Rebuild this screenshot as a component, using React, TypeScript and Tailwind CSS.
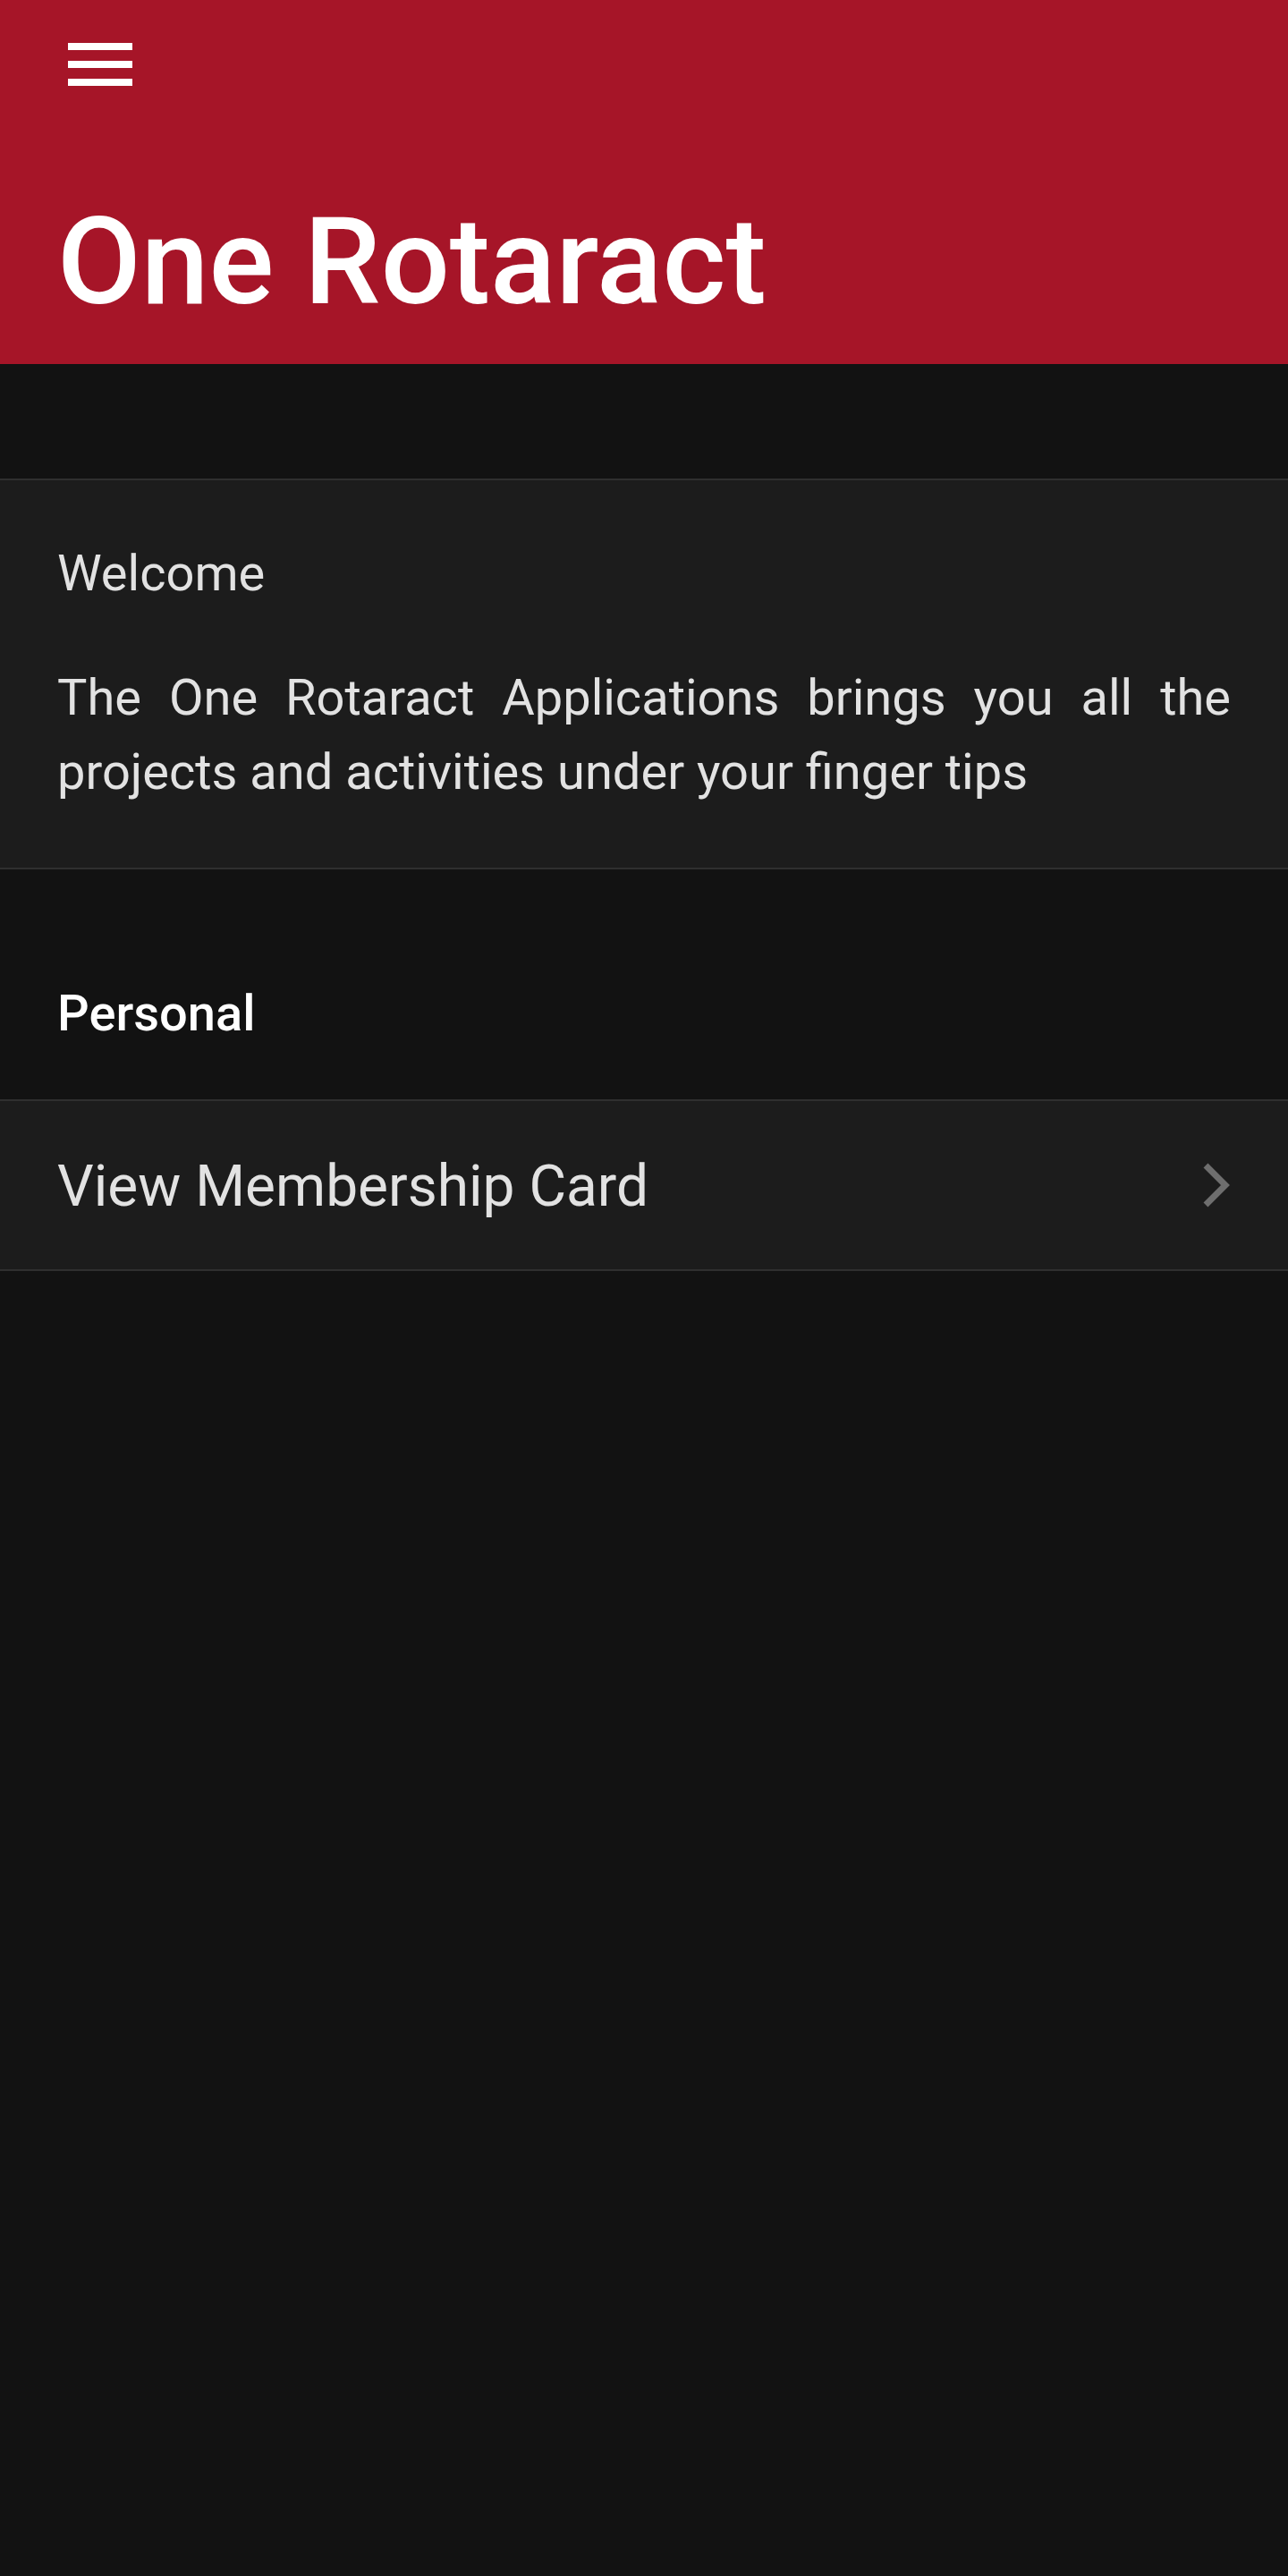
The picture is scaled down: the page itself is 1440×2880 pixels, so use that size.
function MenuIcon() {
  return (
    <svg width="72" height="48" viewBox="0 0 72 48" className="block">
      <rect x="0" y="0" width="72" height="8" fill="#ffffff" />
      <rect x="0" y="20" width="72" height="8" fill="#ffffff" />
      <rect x="0" y="40" width="72" height="8" fill="#ffffff" />
    </svg>
  );
}

function Chevron() {
  return (
    <svg width="32" height="50" viewBox="0 0 32 50" className="block">
      <polyline points="4,3 26,25 4,47" fill="none" stroke="#6e6e6e" strokeWidth="7" strokeLinejoin="miter" />
    </svg>
  );
}

export default function App() {
  return (
    <div className="min-h-screen bg-[#121212] font-['Roboto',sans-serif]">
      {/* Header */}
      <header className="h-[407px] bg-[#a61528] px-16 pt-[48px] flex flex-col">
        <button className="ml-3 w-[72px] h-[48px]" aria-label="Menu">
          <MenuIcon />
        </button>
        <h1 className="mt-[129px] text-[136px] leading-[136px] font-medium text-white">
          One Rotaract
        </h1>
      </header>

      {/* Spacer */}
      <div className="h-[128px]" />

      {/* Welcome card */}
      <section className="bg-[#1c1c1c] border-y-2 border-[#2f2f2f] px-16 pt-[62px] pb-[65px] text-[#e2e2e2]">
        <p className="text-[56px] leading-[84px]">Welcome</p>
        <p className="mt-[56px] text-[56px] leading-[83px] text-justify">
          The One Rotaract Applications brings you all the projects and activities under your finger tips
        </p>
      </section>

      {/* Personal header */}
      <div className="h-[257px] px-16 pb-[68px] flex flex-col justify-end">
        <h2 className="text-[56px] leading-[56px] font-medium text-white">Personal</h2>
      </div>

      {/* Row */}
      <button className="w-full h-[192px] bg-[#1c1c1c] border-y-2 border-[#2f2f2f] px-16 flex items-center justify-between text-left">
        <span className="text-[64px] leading-[64px] text-[#e2e2e2] translate-y-[2px]">View Membership Card</span>
        <Chevron />
      </button>
    </div>
  );
}
